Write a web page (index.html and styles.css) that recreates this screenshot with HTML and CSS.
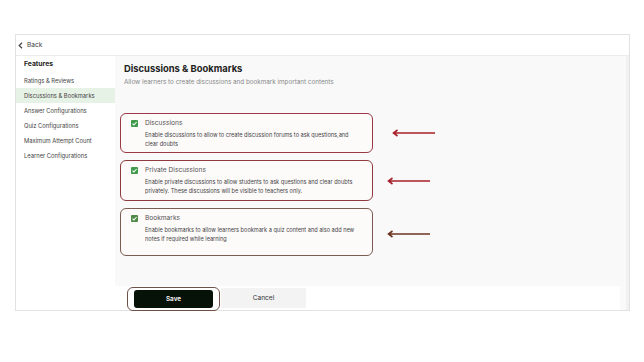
FILE: index.html
```html
<!DOCTYPE html>
<html>
<head>
<meta charset="utf-8">
<link rel="stylesheet" href="styles.css">
</head>
<body>
<div class="frame">
  <div class="topbar">
    <svg class="chev" width="5" height="7" viewBox="0 0 5 7"><path d="M4 0.8 L1.2 3.5 L4 6.2" fill="none" stroke="#444" stroke-width="1.2"/></svg>
    <span class="back">Back</span>
  </div>
  <div class="main">
    <nav class="sidebar">
      <div class="side-head">Features</div>
      <div class="side-item">Ratings &amp; Reviews</div>
      <div class="side-item active">Discussions &amp; Bookmarks</div>
      <div class="side-item">Answer Configurations</div>
      <div class="side-item">Quiz Configurations</div>
      <div class="side-item">Maximum Attempt Count</div>
      <div class="side-item">Learner Configurations</div>
    </nav>
    <section class="content">
      <div class="body">
        <h1 class="title">Discussions &amp; Bookmarks</h1>
        <p class="subtitle">Allow learners to create discussions and bookmark important contents</p>
        <div class="cards">
          <div class="card c1">
            <span class="check"><svg width="7" height="7" viewBox="0 0 7 7"><path d="M1.5 3.6 L2.9 5 L5.6 2" fill="none" stroke="#fff" stroke-width="1.1"/></svg></span>
            <div class="card-text">
              <div class="card-title">Discussions</div>
              <div class="card-desc">Enable discussions to allow to create discussion forums to ask questions,and clear doubts</div>
            </div>
            <svg class="arrow a1" width="44" height="8" viewBox="0 0 44 8"><path d="M43 4 H2 M5.5 1 L1.5 4 L5.5 7" fill="none" stroke="#a8202a" stroke-width="1.6"/></svg>
          </div>
          <div class="card c2">
            <span class="check"><svg width="7" height="7" viewBox="0 0 7 7"><path d="M1.5 3.6 L2.9 5 L5.6 2" fill="none" stroke="#fff" stroke-width="1.1"/></svg></span>
            <div class="card-text">
              <div class="card-title">Private Discussions</div>
              <div class="card-desc">Enable private discussions to allow students to ask questions and clear doubts privately. These discussions will be visible to teachers only.</div>
            </div>
            <svg class="arrow a2" width="44" height="8" viewBox="0 0 44 8"><path d="M43 4 H2 M5.5 1 L1.5 4 L5.5 7" fill="none" stroke="#a8202a" stroke-width="1.6"/></svg>
          </div>
          <div class="card c3">
            <span class="check dark"><svg width="7" height="7" viewBox="0 0 7 7"><path d="M1.5 3.6 L2.9 5 L5.6 2" fill="none" stroke="#fff" stroke-width="1.1"/></svg></span>
            <div class="card-text">
              <div class="card-title">Bookmarks</div>
              <div class="card-desc">Enable bookmarks to allow learners bookmark a quiz content and also add new notes if required while learning</div>
            </div>
            <svg class="arrow a3" width="44" height="8" viewBox="0 0 44 8"><path d="M43 4 H2 M5.5 1 L1.5 4 L5.5 7" fill="none" stroke="#6b3520" stroke-width="1.6"/></svg>
          </div>
        </div>
      </div>
      <div class="footer">
        <div class="save-wrap"><button class="save">Save</button></div>
        <button class="cancel">Cancel</button>
      </div>
    </section>
  </div>
</div>
</body>
</html>
```
FILE: styles.css
```css
* { box-sizing: border-box; }
html, body { margin: 0; padding: 0; background: #fff; }
body { font-family: Inter, "Noto Sans", sans-serif; color: #333; }

.frame {
  margin: 34px 0 0 15px;
  width: 615px;
  height: 277px;
  border: 1px solid #e2e2e2;
  display: flex;
  flex-direction: column;
}
.topbar {
  height: 21px;
  border-bottom: 1px solid #ececec;
  display: flex;
  align-items: center;
  padding-left: 2px;
  gap: 4px;
}
.back { font-size: 6.6px; color: #444; }

.main { flex: 1; display: flex; min-height: 0; }
.sidebar {
  width: 99px;
  background: #fff;
  padding-top: 1px;
}
.side-head {
  font-size: 6.8px;
  font-weight: 700;
  color: #222;
  padding-left: 8px;
  height: 16px;
  line-height: 14px;
}
.side-item {
  font-size: 5.8px;
  color: #444;
  padding-left: 8px;
  height: 15px;
  line-height: 15px;
}
.side-item.active { background: #e7f2e6; }

.content {
  flex: 1;
  background: #f9f9f9;
  border-right: 3px solid #f1f1f1;
  display: flex;
  flex-direction: column;
}
.body { flex: 1; padding: 6px 0 0 5px; }
.title {
  margin: 0;
  padding-left: 4px;
  font-size: 9.4px;
  font-weight: 700;
  color: #222;
  line-height: 14px;
}
.subtitle {
  margin: 2px 0 0;
  padding-left: 4px;
  font-size: 6.3px;
  color: #888;
  line-height: 9px;
}
.cards {
  margin-top: 26px;
  display: flex;
  flex-direction: column;
  gap: 7px;
}
.card {
  position: relative;
  width: 253px;
  border: 1.2px solid #9b3a45;
  border-radius: 6px;
  background: #fdfafa;
  display: flex;
  gap: 7px;
  padding: 5px 10px 0 10px;
  height: 40px;
}
.card.c2 { border-color: #8e3a3f; height: 41px; }
.card.c3 { border-color: #7d5a52; height: 48px; }
.check {
  flex: none;
  width: 7px;
  height: 7px;
  margin-top: 1px;
  background: #3f9a4b;
  border-radius: 1px;
  display: flex;
}
.check.dark { background: #4f8a47; }
.card-title {
  font-size: 6.6px;
  color: #555;
  line-height: 8px;
}
.card-desc {
  margin-top: 4px;
  font-size: 5.6px;
  color: #444;
  line-height: 9px;
  width: 215px;
}
.arrow { position: absolute; top: 50%; margin-top: -4px; }
.a1 { left: 271px; }
.a2 { left: 266px; }
.a3 { left: 266px; margin-top: -2px; }

.footer {
  height: 24px;
  background: #fff;
  margin-right: 6px;
  display: flex;
  align-items: center;
  padding-left: 12px;
}
.save-wrap {
  border: 1.2px solid #6e5048;
  border-radius: 6px;
  padding: 2px 6px;
  margin-top: 1px;
}
.save {
  display: block;
  width: 79px;
  height: 18px;
  background: #061208;
  color: #fff;
  border: none;
  border-radius: 3px;
  font-family: Inter, sans-serif;
  font-size: 6.4px;
  font-weight: 600;
}
.cancel {
  width: 85px;
  height: 20px;
  background: #f3f3f3;
  border: none;
  color: #333;
  font-family: Inter, sans-serif;
  font-size: 6.6px;
  margin-left: 1px;
}
```
